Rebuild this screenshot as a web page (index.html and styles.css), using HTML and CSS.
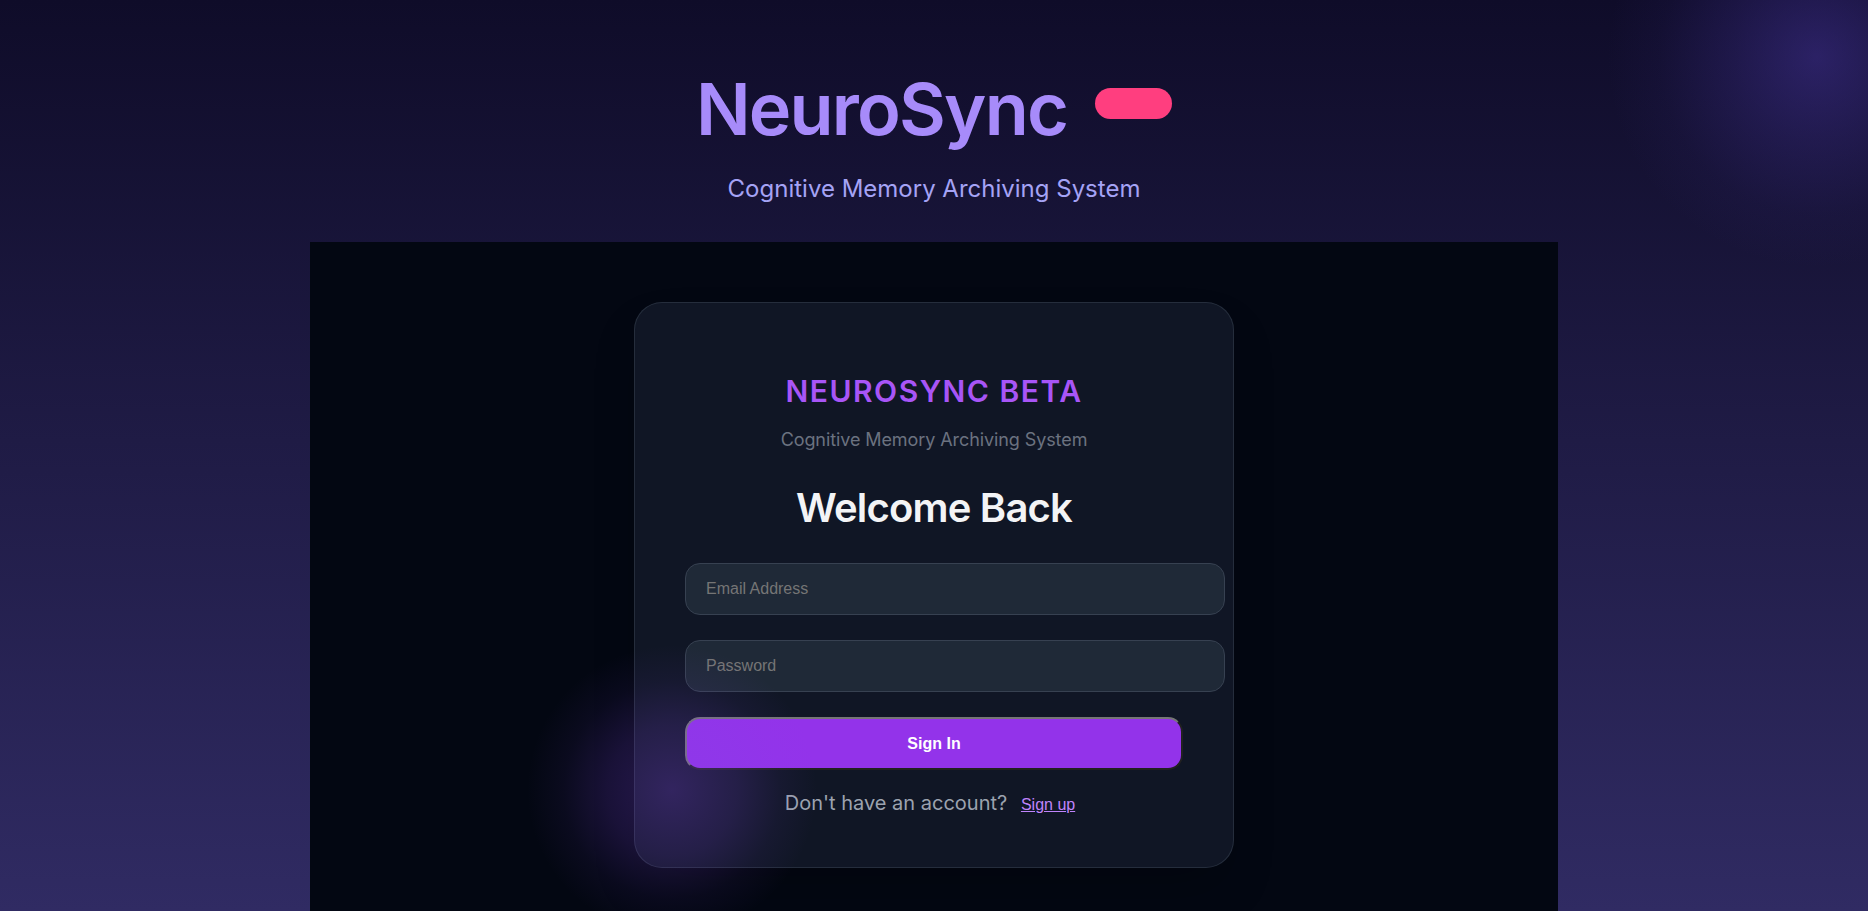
FILE: index.html
```html
<!DOCTYPE html>
<html lang="en">
<head>
<meta charset="utf-8">
<title>NeuroSync</title>
<link rel="stylesheet" href="styles.css">
</head>
<body>
<div class="page">
  <div class="glow glow-top"></div>
  <header class="hero">
    <div class="brand-row">
      <h1 class="brand">NeuroSync</h1>
      <span class="badge"></span>
    </div>
    <p class="hero-sub">Cognitive Memory Archiving System</p>
  </header>
  <main class="panel">
    <section class="card">
      <h2 class="card-brand">NEUROSYNC BETA</h2>
      <p class="card-sub">Cognitive Memory Archiving System</p>
      <h3 class="welcome">Welcome Back</h3>
      <form class="form">
        <input class="field" type="email" placeholder="Email Address">
        <input class="field" type="password" placeholder="Password">
        <button class="submit" type="button">Sign In</button>
      </form>
      <p class="switch">Don't have an account? <button class="link" type="button">Sign up</button></p>
    </section>
  </main>
  <div class="glow glow-bottom"></div>
</div>
</body>
</html>
```

FILE: styles.css
```css
html, body {
  margin: 0;
  padding: 0;
}

body {
  font-family: "Inter", "Noto Sans", sans-serif;
  background: linear-gradient(180deg, #0f0c29 0px, #302b63 911px);
  min-height: 911px;
  overflow: hidden;
}

.page {
  position: relative;
  min-height: 911px;
  display: flex;
  flex-direction: column;
  align-items: center;
  overflow: hidden;
}

.glow {
  position: absolute;
  border-radius: 50%;
  pointer-events: none;
}

.glow-top {
  width: 420px;
  height: 420px;
  left: 1607px;
  top: -153px;
  background: radial-gradient(circle closest-side, rgba(80, 60, 180, 0.42) 0%, rgba(80, 60, 180, 0.22) 40%, rgba(80, 60, 180, 0.06) 75%, rgba(80, 60, 180, 0) 100%);
}

.glow-bottom {
  width: 290px;
  height: 290px;
  left: 527px;
  top: 645px;
  background: radial-gradient(circle closest-side, rgba(130, 70, 230, 0.3) 0%, rgba(130, 70, 230, 0.18) 45%, rgba(130, 70, 230, 0.06) 75%, rgba(130, 70, 230, 0) 100%);
}

.hero {
  padding-top: 73px;
  display: flex;
  flex-direction: column;
  align-items: center;
}

.brand-row {
  display: flex;
  align-items: flex-start;
  gap: 28px;
}

.brand {
  margin: 0;
  font-size: 72px;
  line-height: 72px;
  font-weight: 600;
  letter-spacing: -0.025em;
  color: #a78bfa;
}

.badge {
  margin-top: 15px;
  width: 77px;
  height: 31px;
  border-radius: 999px;
  background: #ff3e7f;
}

.hero-sub {
  margin: 28px 0 0;
  font-size: 24px;
  line-height: 32px;
  color: #a5a3f5;
}

.panel {
  margin-top: 37px;
  width: 1248px;
  flex: 1;
  background: #030712;
  display: flex;
  justify-content: center;
  padding: 60px 0 44px;
  box-sizing: border-box;
}

.card {
  position: relative;
  width: 600px;
  box-sizing: border-box;
  padding: 70px 50px 50px;
  border-radius: 28px;
  background: rgba(17, 24, 39, 0.92);
  border: 1px solid rgba(55, 65, 81, 0.55);
  box-shadow: 0 25px 50px -12px rgba(0, 0, 0, 0.25);
  text-align: center;
}

.card-brand {
  margin: 0;
  font-size: 30px;
  line-height: 36px;
  font-weight: 600;
  letter-spacing: 0.05em;
  color: #a855f7;
}

.card-sub {
  margin: 17px 0 0;
  font-size: 18px;
  line-height: 28px;
  letter-spacing: -0.005em;
  color: #6b7280;
}

.welcome {
  margin: 30px 0 0;
  font-size: 40px;
  line-height: 48px;
  font-weight: 600;
  letter-spacing: -0.02em;
  color: #f3f4f6;
}

.form {
  margin-top: 31px;
  display: flex;
  flex-direction: column;
  align-items: flex-start;
  gap: 25px;
}

.field {
  width: 100%;
  box-sizing: content-box;
  padding: 16px 20px;
  font-family: "Liberation Sans", Arial, sans-serif;
  font-size: 16px;
  color: #e5e7eb;
  background: #1f2937;
  border: 1px solid #374151;
  border-radius: 15px;
  outline: none;
}

.field::placeholder {
  color: #757575;
}

.submit {
  width: 100%;
  box-sizing: border-box;
  padding: 15px 0;
  line-height: 19px;
  font-family: "Liberation Sans", Arial, sans-serif;
  font-size: 16px;
  font-weight: 700;
  color: #ffffff;
  background: #9333ea;
  border: 2px outset #767676;
  border-radius: 15px;
}

.switch {
  margin: 19px 0 0;
  font-size: 20px;
  line-height: 28px;
  color: #9ca3af;
}

.link {
  margin: 0 8px 0 8px;
  padding: 0;
  border: none;
  background: none;
  font-family: "Liberation Sans", Arial, sans-serif;
  font-size: 16px;
  line-height: 1;
  color: #c084fc;
  text-decoration: underline;
}
```
